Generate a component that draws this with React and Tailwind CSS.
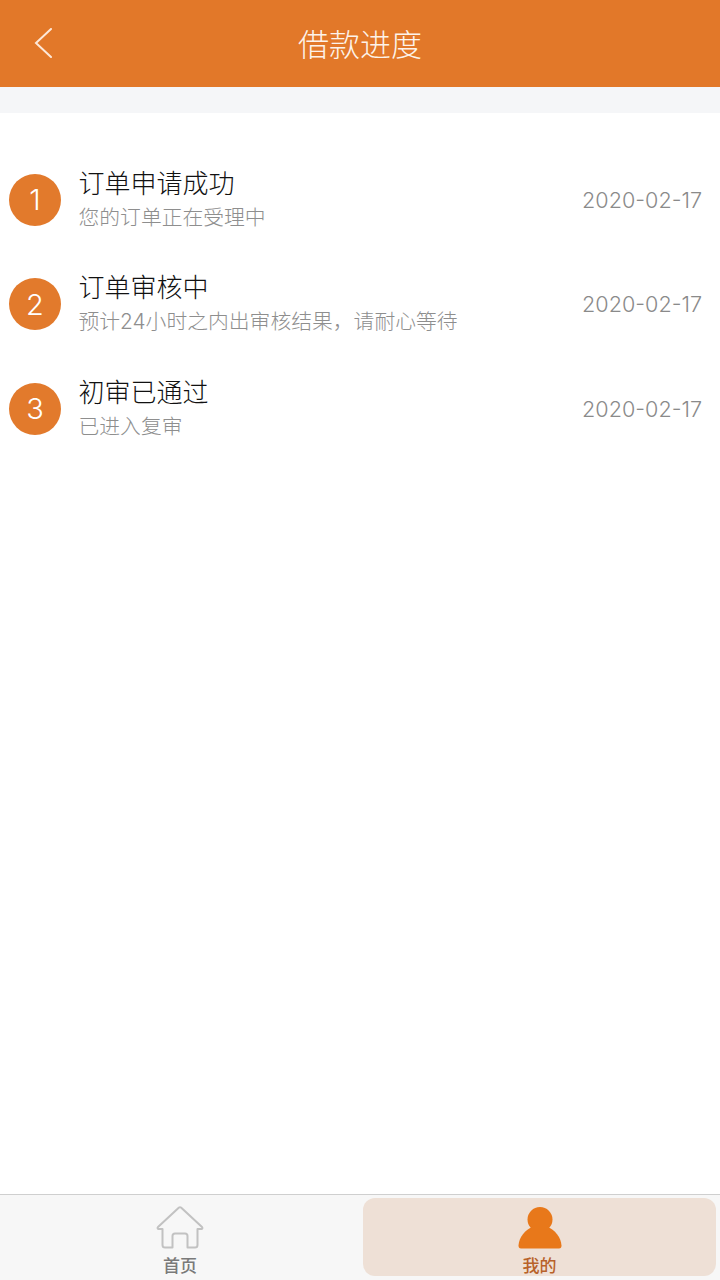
import React from 'react';

const steps = [
  { title: '订单申请成功', desc: '您的订单正在受理中', date: '2020-02-17' },
  { title: '订单审核中', desc: '预计24小时之内出审核结果，请耐心等待', date: '2020-02-17' },
  { title: '初审已通过', desc: '已进入复审', date: '2020-02-17' },
];

const HomeIcon = () => (
  <svg className="shrink-0" width="48" height="44" viewBox="0 0 48 44" fill="none" stroke="#c2c2c2" strokeWidth="2" strokeLinejoin="round" strokeLinecap="round">
    <path d="M9 41.5 Q6.5 41.5 6.5 39 L6.5 23 L2.5 23 Q1 22.5 2 21 L23 1.5 Q24 0.8 25 1.5 L46 21 Q47 22.5 45.5 23 L41.5 23 L41.5 39 Q41.5 41.5 39 41.5 L31.5 41.5 L31.5 30 Q31.5 27.5 29 27.5 L19 27.5 Q16.5 27.5 16.5 30 L16.5 41.5 Z" />
  </svg>
);

const UserIcon = () => (
  <svg className="shrink-0" width="44" height="44" viewBox="0 0 44 44" fill="#e8781a">
    <circle cx="22" cy="13.5" r="12.5" />
    <path d="M0.5 39.5 C1 31 7 24 15 20.5 L29 20.5 C37 24 43 31 43.5 39.5 Q43.5 42.5 41 42.5 L3 42.5 Q0.5 42.5 0.5 39.5 Z" />
  </svg>
);

export default function App() {
  return (
    <div className="flex h-[1280px] w-[720px] flex-col bg-white font-['Inter','Noto_Sans_CJK_SC',sans-serif]">
      <header className="relative flex h-[87px] shrink-0 items-center justify-center bg-[#e27829] pt-[1px]">
        <svg className="absolute left-[34px] top-[28px]" width="18" height="30" viewBox="0 0 18 30" fill="none" stroke="#fde8d8" strokeWidth="2" strokeLinecap="round">
          <path d="M17 1 L2 15 L17 29" />
        </svg>
        <h1 className="text-[31px] font-light leading-none text-[#fdf3ea]">借款进度</h1>
      </header>
      <div className="h-[26px] shrink-0 bg-[#f5f6f8]" />

      <main className="flex-1 pt-[54px]">
        {steps.map((step, i) => (
          <div key={i} className="flex h-[104.4px] items-start pl-[9px] pr-[18px]">
            <div className="mt-[7px] flex h-[52px] w-[52px] shrink-0 items-center justify-center rounded-full bg-[#e27a2c] text-[29px] font-light text-white">
              {i + 1}
            </div>
            <div className="ml-[17.5px] flex-1">
              <div className="text-[26px] font-light leading-[34px] text-[#111111]">{step.title}</div>
              <div className="mt-[1px] text-[20.8px] font-light leading-[32px] text-[#8e8e8e]">{step.desc}</div>
            </div>
            <div className="mt-[19px] text-[21.6px] font-light leading-[28px] text-[#8a8a8a]">{step.date}</div>
          </div>
        ))}
      </main>

      <nav className="flex h-[86px] shrink-0 border-t border-[#cfcfcf] bg-[#f7f7f7]">
        <div className="flex w-[360px] flex-col items-center pt-[11px]">
          <HomeIcon />
          <span className="mt-[5px] text-[17px] font-medium leading-[22px] text-[#7a7a7a]">首页</span>
        </div>
        <div className="ml-[3px] mt-[3px] flex h-[78px] w-[353px] flex-col items-center rounded-[12px] bg-[#eee0d6] pt-[8px]">
          <UserIcon />
          <span className="mt-[5px] text-[17px] font-medium leading-[22px] text-[#b8622a]">我的</span>
        </div>
      </nav>
    </div>
  );
}
